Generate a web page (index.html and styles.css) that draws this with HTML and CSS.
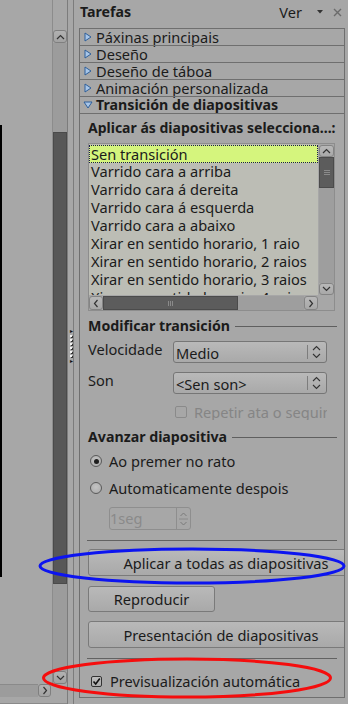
FILE: index.html
```html
<!DOCTYPE html>
<html lang="gl">
<head>
<meta charset="utf-8">
<title>Tarefas</title>
<link rel="stylesheet" href="styles.css">
</head>
<body>
<div class="app">
  <div class="doc">
    <div class="doc-main">
      <div class="canvas"><div class="slide-edge"></div></div>
      <div class="vscroll">
        <div class="sb-btn"><svg width="9" height="6" viewBox="0 0 9 6"><path d="M1 5 L4.5 1.5 L8 5" fill="none" stroke="#333" stroke-width="1.2"/></svg></div>
        <div class="sb-track">
          <div class="sb-thumb"></div>
          <div class="sb-rest"></div>
        </div>
        <div class="sb-btn"><svg width="9" height="6" viewBox="0 0 9 6"><path d="M1 1 L4.5 4.5 L8 1" fill="none" stroke="#333" stroke-width="1.2"/></svg></div>
      </div>
    </div>
    <div class="hscroll">
      <div class="hs-track"></div>
      <div class="sb-btn hs-btn"><svg width="6" height="9" viewBox="0 0 6 9"><path d="M1.5 1 L4.5 4.5 L1.5 8" fill="none" stroke="#333" stroke-width="1.2"/></svg></div>
    </div>
  </div>

  <div class="splitter">
    <div class="split-line"></div>
    <div class="grip">
      <span class="grip-arrow">▸</span>
      <span class="grip-dot"></span><span class="grip-dot"></span><span class="grip-dot"></span><span class="grip-dot"></span><span class="grip-dot"></span><span class="grip-dot"></span>
      <span class="grip-arrow">▸</span>
    </div>
  </div>

  <div class="sidebar">
    <div class="titlebar">
      <span class="title">Tarefas</span>
      <span class="ver">Ver</span>
      <svg class="ver-arrow" width="6" height="4" viewBox="0 0 6 4"><path d="M0 0 H6 L3 3.5 Z" fill="#333"/></svg>
      <svg class="close" width="9" height="9" viewBox="0 0 9 9"><path d="M1 1 L8 8 M8 1 L1 8" stroke="#6b6b6b" stroke-width="1.4"/></svg>
    </div>

    <div class="deck">
      <div class="deck-row"><svg class="tri" width="8" height="10" viewBox="0 0 8 10"><path d="M1 1 L7 5 L1 9 Z" fill="#a8c6e8" stroke="#2f5f9a" stroke-width="1"/></svg>Páxinas principais</div>
      <div class="deck-row"><svg class="tri" width="8" height="10" viewBox="0 0 8 10"><path d="M1 1 L7 5 L1 9 Z" fill="#a8c6e8" stroke="#2f5f9a" stroke-width="1"/></svg>Deseño</div>
      <div class="deck-row"><svg class="tri" width="8" height="10" viewBox="0 0 8 10"><path d="M1 1 L7 5 L1 9 Z" fill="#a8c6e8" stroke="#2f5f9a" stroke-width="1"/></svg>Deseño de táboa</div>
      <div class="deck-row"><svg class="tri" width="8" height="10" viewBox="0 0 8 10"><path d="M1 1 L7 5 L1 9 Z" fill="#a8c6e8" stroke="#2f5f9a" stroke-width="1"/></svg>Animación personalizada</div>
      <div class="deck-row open"><svg class="tri" width="10" height="8" viewBox="0 0 10 8"><path d="M1 1 L9 1 L5 7 Z" fill="#a8c6e8" stroke="#2f5f9a" stroke-width="1"/></svg>Transición de diapositivas</div>

      <div class="panel">
        <div class="heading">Aplicar ás diapositivas selecciona...:</div>

        <div class="listbox">
          <div class="lb-main">
            <div class="lb-items">
              <div class="lb-item sel">Sen transición</div>
              <div class="lb-item">Varrido cara a arriba</div>
              <div class="lb-item">Varrido cara á dereita</div>
              <div class="lb-item">Varrido cara á esquerda</div>
              <div class="lb-item">Varrido cara a abaixo</div>
              <div class="lb-item">Xirar en sentido horario, 1 raio</div>
              <div class="lb-item">Xirar en sentido horario, 2 raios</div>
              <div class="lb-item">Xirar en sentido horario, 3 raios</div>
              <div class="lb-item">Xirar en sentido horario, 4 raios</div>
            </div>
            <div class="lb-vs">
              <div class="lb-btn"><svg width="9" height="6" viewBox="0 0 9 6"><path d="M1 5 L4.5 1.5 L8 5" fill="none" stroke="#333" stroke-width="1.2"/></svg></div>
              <div class="lb-vthumb"><span class="grip-lines"></span></div>
              <div class="lb-vtrack"></div>
              <div class="lb-btn"><svg width="9" height="6" viewBox="0 0 9 6"><path d="M1 1 L4.5 4.5 L8 1" fill="none" stroke="#333" stroke-width="1.2"/></svg></div>
            </div>
          </div>
          <div class="lb-hs">
            <div class="lb-btn h"><svg width="6" height="9" viewBox="0 0 6 9"><path d="M4.5 1 L1.5 4.5 L4.5 8" fill="none" stroke="#333" stroke-width="1.2"/></svg></div>
            <div class="lb-hthumb"><span class="grip-vlines"></span></div>
            <div class="lb-htrack"></div>
            <div class="lb-btn h"><svg width="6" height="9" viewBox="0 0 6 9"><path d="M1.5 1 L4.5 4.5 L1.5 8" fill="none" stroke="#333" stroke-width="1.2"/></svg></div>
            <div class="lb-corner"></div>
          </div>
        </div>

        <div class="group-head"><span>Modificar transición</span><span class="rule"></span></div>
        <div class="form-row">
          <span class="label">Velocidade</span>
          <div class="combo"><span class="combo-text">Medio</span><span class="combo-sep"></span><svg class="updown" width="9" height="14" viewBox="0 0 9 14"><path d="M1 5 L4.5 1.5 L8 5 M1 9 L4.5 12.5 L8 9" fill="none" stroke="#333" stroke-width="1.1"/></svg></div>
        </div>
        <div class="form-row son">
          <span class="label">Son</span>
          <div class="combo"><span class="combo-text">&lt;Sen son&gt;</span><span class="combo-sep"></span><svg class="updown" width="9" height="14" viewBox="0 0 9 14"><path d="M1 5 L4.5 1.5 L8 5 M1 9 L4.5 12.5 L8 9" fill="none" stroke="#333" stroke-width="1.1"/></svg></div>
        </div>
        <div class="check-row disabled">
          <span class="checkbox dis"></span>
          <span class="clip">Repetir ata o seguinte son</span>
        </div>

        <div class="group-head adv"><span>Avanzar diapositiva</span><span class="rule"></span></div>
        <div class="radio-row"><span class="radio on"></span>Ao premer no rato</div>
        <div class="radio-row"><span class="radio"></span>Automaticamente despois</div>
        <div class="spin">
          <span class="spin-text">1seg</span>
          <span class="spin-btns">
            <svg width="9" height="20" viewBox="0 0 9 20"><path d="M1.5 7 L4.5 4 L7.5 7 M1.5 13 L4.5 16 L7.5 13" fill="none" stroke="#7a7a7a" stroke-width="1"/><path d="M0 10 H9" stroke="#8a8a8a"/></svg>
          </span>
        </div>

        <div class="sep"></div>
        <div class="btn wide apply">Aplicar a todas as diapositivas</div>
        <div class="btn small">Reproducir</div>
        <div class="btn wide pres">Presentación de diapositivas</div>
        <div class="sep second"></div>
        <div class="check-row final">
          <span class="checkbox on"><svg width="9" height="9" viewBox="0 0 9 9"><path d="M1.5 4.5 L3.7 7 L7.8 1.5" fill="none" stroke="#111" stroke-width="1.6"/></svg></span>
          Previsualización automática
        </div>
      </div>
    </div>
  </div>
</div>

<svg class="marks" width="348" height="704" viewBox="0 0 348 704">
  <ellipse cx="192" cy="566" rx="152" ry="17" fill="none" stroke="#0c14f0" stroke-width="3"/>
  <ellipse cx="187" cy="678" rx="143.5" ry="19" fill="none" stroke="#f50d0d" stroke-width="3"/>
</svg>
</body>
</html>
```

FILE: styles.css
```css
* { box-sizing: border-box; }
html, body {
  margin: 0;
  padding: 0;
}
body {
  width: 348px;
  height: 704px;
  overflow: hidden;
  background: #a7a7a7;
  font-family: "Noto Sans", "DejaVu Sans", sans-serif;
  font-size: 14.6px;
  color: #1b1b1b;
  position: relative;
}
svg { display: block; }

.app {
  display: flex;
  height: 704px;
}

/* ---------- document area ---------- */
.doc {
  width: 67px;
  display: flex;
  flex-direction: column;
}
.doc-main {
  flex: 1;
  display: flex;
}
.canvas {
  width: 52px;
  padding-top: 125px;
}
.slide-edge {
  width: 2px;
  height: 452px;
  background: #000;
}
.vscroll {
  width: 15px;
  padding-top: 30px;
  display: flex;
  flex-direction: column;
  border-left: 1px solid #8c8c8c;
}
.sb-btn {
  height: 13px;
  border: 1px solid #7f7f7f;
  border-radius: 3px;
  background: linear-gradient(#b2b2b2, #a2a2a2);
  display: flex;
  align-items: center;
  justify-content: center;
}
.sb-track {
  flex: 1;
  display: flex;
  flex-direction: column;
  background: #9c9c9c;
  padding-top: 89px;
}
.sb-thumb {
  height: 452px;
  background: #575757;
  border: 1px solid #4a4a4a;
}
.sb-rest { flex: 1; }

.hscroll {
  height: 20px;
  display: flex;
  align-items: flex-start;
  border-bottom: 1px solid #8a8a8a;
}
.hs-track {
  width: 38px;
  height: 13px;
  background: #9c9c9c;
  border-top: 1px solid #8a8a8a;
}
.hs-btn {
  width: 13px;
  height: 13px;
}

/* ---------- splitter ---------- */
.splitter {
  width: 12px;
  border-left: 1px solid #7c7c7c;
  display: flex;
  position: relative;
}
.split-line {
  width: 6px;
  border-right: 1px solid #7c7c7c;
}
.grip {
  position: absolute;
  left: 2px;
  top: 329px;
  display: flex;
  flex-direction: column;
  align-items: flex-start;
  gap: 2px;
}
.grip-arrow {
  font-size: 6px;
  line-height: 4px;
  color: #111;
}
.grip-dot {
  width: 2px;
  height: 2px;
  background: #f2f2f2;
  box-shadow: 1px 1px 0 #333;
}

/* ---------- sidebar ---------- */
.sidebar {
  flex: 1;
  display: flex;
  flex-direction: column;
}
.titlebar {
  height: 28px;
  display: flex;
  align-items: center;
  padding: 0 6px 1px 1px;
  line-height: 18px;
}
.title {
  font-weight: bold;
  font-size: 14.2px;
  flex: 1;
  margin-top: -3px;
}
.ver {
  margin-top: -3px;
  margin-right: 15px;
}
.ver-arrow { margin-right: 10px; margin-top: -3px; }
.close { margin-top: -3px; }

.deck {
  flex: 1;
  display: flex;
  flex-direction: column;
  width: 266px;
  padding-bottom: 6px;
}
.deck-row {
  height: 17px;
  border: 1px solid #6f6f6f;
  border-bottom: none;
  display: flex;
  align-items: center;
  padding-left: 4px;
  line-height: 16px;
  white-space: nowrap;
}
.deck-row .tri { margin-right: 4px; }
.deck-row.open {
  font-weight: bold;
  font-size: 14.2px;
  padding-left: 3px;
}
.deck-row.open .tri { margin-right: 3px; }

.panel {
  flex: 1;
  border: 1px solid #6f6f6f;
  padding: 5px 0 0 8px;
  display: flex;
  flex-direction: column;
  align-items: flex-start;
  overflow: hidden;
}
.heading {
  font-weight: bold;
  font-size: 14px;
  line-height: 18px;
  height: 18px;
  white-space: nowrap;
}

/* listbox */
.listbox {
  margin-top: 6px;
  width: 247px;
  height: 168px;
  border: 1px solid #8d8d8d;
  background: #bcbdb5;
  display: flex;
  flex-direction: column;
}
.lb-main {
  flex: 1;
  display: flex;
  min-height: 0;
}
.lb-items {
  flex: 1;
  overflow: hidden;
  padding-top: 1px;
}
.lb-item {
  height: 18px;
  line-height: 17px;
  padding-left: 2px;
  white-space: nowrap;
}
.lb-item.sel {
  background: #d5f57d;
  border: 1px dotted #1a1a50;
  padding-left: 1px;
  line-height: 16px;
}
.lb-vs {
  width: 16px;
  display: flex;
  flex-direction: column;
  padding: 1px 0 0 1px;
  background: #a7a7a7;
}
.lb-btn {
  height: 12px;
  border: 1px solid #848484;
  border-radius: 3px;
  background: linear-gradient(#b8b8b8, #a8a8a8);
  display: flex;
  align-items: center;
  justify-content: center;
}
.lb-vthumb {
  height: 31px;
  background: #5c5c5c;
  border: 1px solid #4b4b4b;
  display: flex;
  align-items: center;
  justify-content: center;
}
.grip-lines {
  width: 6px;
  height: 5px;
  border-top: 1px solid #8a8a8a;
  border-bottom: 1px solid #8a8a8a;
  position: relative;
}
.grip-lines::after {
  content: "";
  position: absolute;
  left: 0; right: 0; top: 1px;
  border-top: 1px solid #8a8a8a;
}
.lb-vtrack {
  flex: 1;
  background: #9e9e9e;
}
.lb-hs {
  height: 15px;
  display: flex;
  background: #a7a7a7;
  padding-top: 1px;
}
.lb-btn.h {
  width: 14px;
  height: 14px;
}
.lb-hthumb {
  width: 135px;
  background: #5c5c5c;
  border: 1px solid #4b4b4b;
  display: flex;
  align-items: center;
  justify-content: center;
}
.grip-vlines {
  width: 5px;
  height: 5px;
  border-left: 1px solid #8a8a8a;
  border-right: 1px solid #8a8a8a;
  position: relative;
}
.grip-vlines::after {
  content: "";
  position: absolute;
  top: 0; bottom: 0; left: 1px;
  border-left: 1px solid #8a8a8a;
}
.lb-htrack {
  flex: 1;
  background: #9e9e9e;
}
.lb-corner { width: 16px; }

/* groups */
.group-head {
  margin-top: 6px;
  width: 249px;
  display: flex;
  align-items: center;
  font-weight: bold;
  font-size: 14.2px;
  line-height: 18px;
  white-space: nowrap;
}
.group-head .rule {
  flex: 1;
  height: 1px;
  background: #5f5f5f;
  margin-left: 5px;
  margin-top: 1px;
}
.form-row {
  margin-top: 6px;
  display: flex;
  align-items: flex-start;
  width: 239px;
}
.form-row.son { margin-top: 9px; }
.label {
  width: 85px;
  line-height: 16px;
}
.combo {
  width: 154px;
  height: 22px;
  border: 1px solid #767676;
  border-radius: 3px;
  background: linear-gradient(#b9b9b9, #a9a9a9);
  display: flex;
  align-items: center;
  padding-left: 2px;
}
.combo-text {
  flex: 1;
  line-height: 18px;
  margin-top: 2px;
  white-space: nowrap;
}
.combo-sep {
  width: 1px;
  height: 14px;
  background: #7d7d7d;
  margin-right: 4px;
}
.updown { margin-right: 5px; }

.check-row {
  display: flex;
  align-items: center;
  white-space: nowrap;
}
.check-row.disabled {
  margin-top: 9px;
  margin-left: 87px;
  width: 152px;
  overflow: hidden;
  color: #858585;
  height: 17px;
}
.checkbox {
  width: 12px;
  height: 12px;
  border: 1px solid #5a5a5a;
  border-radius: 2px;
  background: linear-gradient(#bdbdbd, #adadad);
  margin-right: 6px;
  flex: none;
  display: flex;
  align-items: center;
  justify-content: center;
}
.checkbox.dis {
  border-color: #8a8a8a;
  background: transparent;
  margin-right: 7px;
}
.clip { overflow: hidden; }

.group-head.adv { margin-top: 8px; }
.radio-row {
  height: 18px;
  display: flex;
  align-items: center;
  margin-top: 6px;
  padding-left: 2px;
  white-space: nowrap;
}
.radio-row + .radio-row { margin-top: 9px; }
.radio {
  width: 12px;
  height: 12px;
  border-radius: 50%;
  border: 1px solid #5a5a5a;
  background: radial-gradient(circle at 50% 40%, #c4c4c4, #a8a8a8);
  margin-right: 7px;
  display: flex;
  align-items: center;
  justify-content: center;
}
.radio.on::after {
  content: "";
  width: 5px;
  height: 5px;
  border-radius: 50%;
  background: #1e1e1e;
}

.spin {
  margin: 10px 0 0 21px;
  width: 82px;
  height: 23px;
  display: flex;
  border: 1px solid #8e8e8e;
  border-radius: 3px;
  color: #8a8a8a;
}
.spin-text {
  flex: 1;
  line-height: 21px;
}
.spin-btns {
  width: 14px;
  border-left: 1px solid #8e8e8e;
  display: flex;
  align-items: center;
  justify-content: center;
}

.sep {
  margin-top: 10px;
  margin-left: -1px;
  width: 250px;
  height: 1px;
  background: #626262;
}
.btn {
  height: 27px;
  border: 1px solid #7a7a7a;
  border-radius: 3px;
  background: linear-gradient(#b9b9b9, #a9a9a9);
  display: flex;
  align-items: center;
  justify-content: center;
  white-space: nowrap;
  flex: none;
}
.btn.wide {
  margin-top: 8px;
}
.btn.apply { width: 276px; }
.btn.small {
  width: 127px;
  height: 26px;
  margin-top: 10px;
}
.btn.pres {
  width: 266px;
  margin-top: 9px;
}
.sep.second { margin-top: 10px; }
.check-row.final {
  margin-top: 12px;
  margin-left: 3px;
}
.check-row.final .checkbox {
  width: 11px;
  height: 11px;
  border-color: #333;
  margin-right: 8px;
}

/* annotation ellipses drawn over the UI */
.marks {
  position: absolute;
  left: 0;
  top: 0;
  pointer-events: none;
}
```
